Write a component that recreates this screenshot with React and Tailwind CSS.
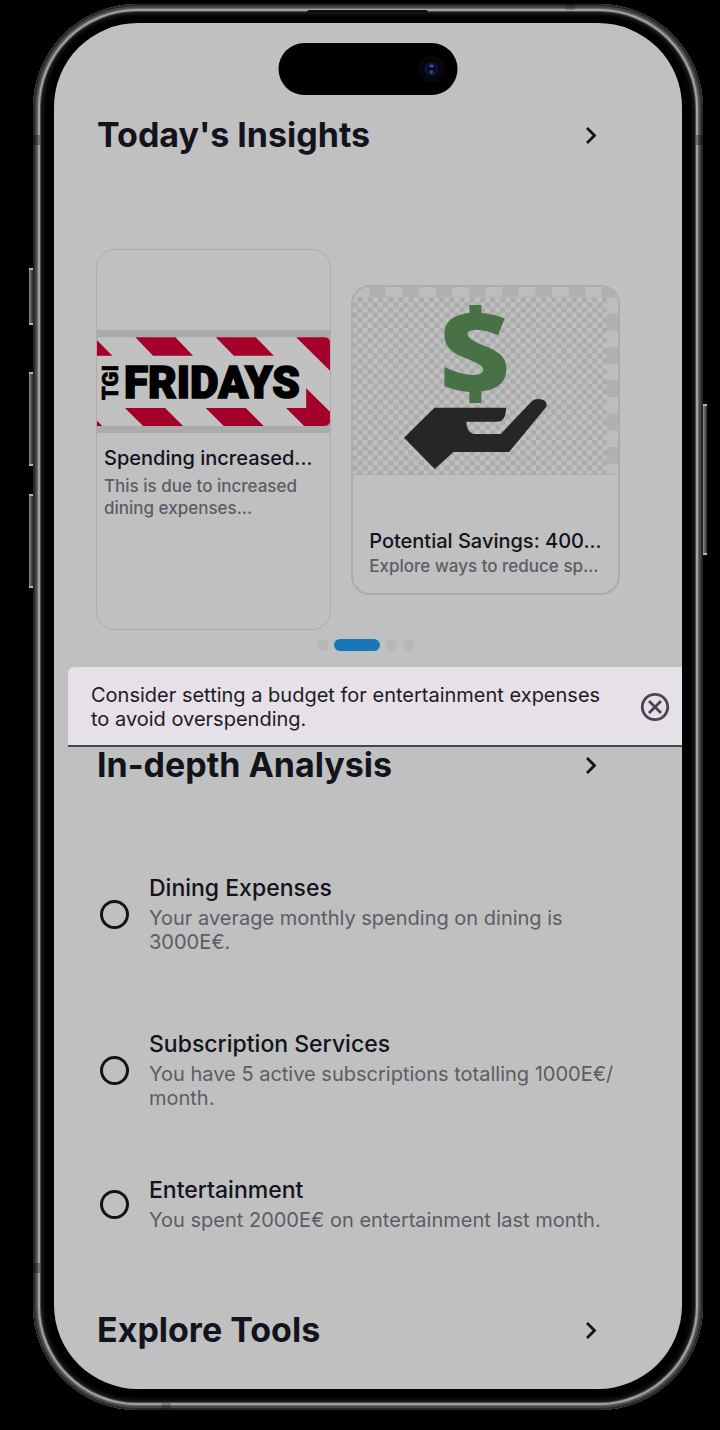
import React from "react";

const analysis = [
  { id: "dining", title: "Dining Expenses", text: "Your average monthly spending on dining is 3000E€.", space: "pt-[87px]" },
  { id: "subs", title: "Subscription Services", text: "You have 5 active subscriptions totalling 1000E€/​month.", space: "pt-[76px]" },
  { id: "fun", title: "Entertainment", text: "You spent 2000E€ on entertainment last month.", space: "pt-[66px]" },
];

function SectionHeader({ title }) {
  return (
    <div className="flex h-11 items-center justify-between pl-[43px] pr-[79px]">
      <h2 className="text-[34px] font-bold leading-[44px] text-[#12131c]">{title}</h2>
      <a href="#" aria-label={title} className="flex h-6 w-6 items-center justify-center">
        <svg viewBox="0 0 24 24" className="h-6 w-6" fill="none" stroke="#12131c" strokeWidth="2.8">
          <path d="M8 5 15.5 12.5 8 20" />
        </svg>
      </a>
    </div>
  );
}

function FridaysLogo() {
  return (
    <svg viewBox="0 0 233 103" preserveAspectRatio="xMidYMid slice" className="block h-[103px] w-full" role="img" aria-label="TGI Fridays">
      <rect width="233" height="103" fill="#ababab" />
      <g transform="translate(-7 -90) scale(.33333)">
        <path d="M21 292H702Q720 292 720 310V540Q720 558 702 558H21Z" fill="#c1c1c1" />
        <g fill="#a50029">
          <path d="M21 301 67 347H21Z" />
          <path d="M136 292H256L309 347H189Z" />
          <path d="M377 292H497L551 347H431Z" />
          <path d="M618 292H702Q720 292 720 310V393Z" />
          <path d="M648 445 720 516V540Q720 558 702 558H642L588 504H648Z" />
          <path d="M347 504H467L521 558H401Z" />
          <path d="M105 504H225L279 558H159Z" />
          <path d="M21 542 37 558H21Z" />
        </g>
      </g>
      <text x="27" y="68" fill="#000" stroke="#000" strokeWidth="1.6" className="font-[Roboto,sans-serif] text-[44px] font-black">FRIDAYS</text>
      <text transform="translate(21 70) rotate(-90)" fill="#000" stroke="#000" strokeWidth="0.6" className="font-[Roboto,sans-serif] text-[22px] font-black">TGI</text>
    </svg>
  );
}

function SavingsArt() {
  return (
    <svg viewBox="0 0 266 187" preserveAspectRatio="xMidYMid slice" className="block h-[187px] w-full" aria-hidden="true">
      <defs>
        <pattern id="large" x="74" y="17" width="99.8" height="99.8" patternUnits="userSpaceOnUse">
          <rect width="99.8" height="99.8" fill="#bdbdbd" />
          <path d="M0 0H49.9V49.9H0ZM49.9 49.9H99.8V99.8H49.9Z" fill="#b0b0b0" />
        </pattern>
        <pattern id="small" x="24" y="67" width="30.6" height="30.6" patternUnits="userSpaceOnUse">
          <rect width="30.6" height="30.6" fill="#bfbfbf" />
          <path d="M15.3 0H30.6V15.3H15.3ZM0 15.3H15.3V30.6H0Z" fill="#ababab" />
        </pattern>
      </defs>
      <g transform="translate(-8 -12) scale(.33333)">
        <rect x="20" y="30" width="806" height="570" fill="url(#large)" />
        <rect x="20" y="67" width="767" height="533" fill="url(#small)" />
        <path fill="#487245" d="M375 90H411V114Q448 117 481 130L461 181Q425 165 395 164Q368 165 369 178Q371 192 405 206C455 226 486 240 486 280C486 325 455 345 411 349V384H375V351Q333 348 300 333V276Q345 299 390 300Q415 299 417 284Q417 270 375 254C330 237 300 222 300 177C300 135 335 118 375 114Z" />
        <path fill="#262626" d="M179 488 270 398H485Q485 440 457 440H366Q367 477 395 477H469L560 381Q568 372 582 372Q606 373 607 390Q606 396 603 399L494 531H327L271 582Z" />
      </g>
    </svg>
  );
}

function SideKey({ className }) {
  return <div aria-hidden="true" className={"absolute w-1 bg-linear-to-r from-[#8a8a8a] to-[#303030] border-y-2 border-[#b5b5b5] " + className} />;
}

export default function App() {
  return (
    <div className="min-h-screen bg-black pb-5 pl-[33px] pr-[17px] pt-1 font-[Inter,sans-serif]">
      <div className="relative rounded-[104px] bg-black px-[21px] pb-[21px] pt-[19px] shadow-[inset_0_0_0_2px_#282828,inset_0_0_0_4px_#484848,inset_0_0_0_5px_#6a6a6a,inset_0_0_0_7px_#a2a2a2,inset_0_0_0_8px_#484848,inset_0_0_5px_9px_#2c2c2c]">
        <SideKey className="-left-1 top-[264px] h-[57px]" />
        <SideKey className="-left-1 top-[368px] h-[94px]" />
        <SideKey className="-left-1 top-[490px] h-[94px]" />
        <SideKey className="-right-1 top-[400px] h-[151px]" />
        <div aria-hidden="true" className="absolute left-[274px] top-[6px] h-[4px] w-[121px] rounded-full bg-[#111111]" />
        <div aria-hidden="true" className="absolute left-[532px] top-0 h-[6px] w-[10px] bg-black/20" />
        <div aria-hidden="true" className="absolute left-0 top-[131px] h-[10px] w-[7px] bg-black/30" />
        <div aria-hidden="true" className="absolute right-0 top-[131px] h-[10px] w-[7px] bg-black/30" />
        <div aria-hidden="true" className="absolute bottom-[137px] left-0 h-[10px] w-[7px] bg-black/30" />
        <div aria-hidden="true" className="absolute bottom-0 left-[128px] h-[7px] w-[10px] bg-black/20" />

        <main className="relative overflow-hidden rounded-[84px] bg-[#c0c0c0] pb-[37px] pt-[90px]">
          <div aria-hidden="true" className="absolute left-1/2 top-5 flex h-[52px] w-[179px] -translate-x-1/2 items-center justify-end rounded-full bg-black pr-3">
            <svg viewBox="0 0 28 28" className="h-7 w-7">
              <circle cx="14" cy="14" r="13.5" fill="#08060a" />
              <circle cx="14" cy="14" r="7" fill="#0c1238" />
              <circle cx="14" cy="14" r="4.5" fill="#070b22" />
              <ellipse cx="14" cy="11" rx="2.5" ry="1.6" fill="#4a459c" />
              <ellipse cx="14" cy="17" rx="2" ry="1.8" fill="#235a80" />
            </svg>
          </div>

          <SectionHeader title="Today's Insights" />

          <div className="flex items-center gap-5 pl-[42px] pr-[62px] pt-[92px]">
            <article className="h-[381px] min-w-0 flex-[236] overflow-hidden rounded-[19px] border border-[#abacb1] pt-20">
              <FridaysLogo />
              <div className="px-[7px] pt-3">
                <h3 className="truncate text-[20px] font-medium leading-[26px] text-[#12131c]">Spending increased...</h3>
                <p className="pt-1 text-[17px] font-medium leading-[22px] text-[#5a5d67]">This is due to increased dining expenses...</p>
              </div>
            </article>
            <article className="h-[310px] min-w-0 flex-[268] overflow-hidden rounded-[19px] border-2 border-[#abacb1]">
              <div className="border-b border-[#abacb1]">
                <SavingsArt />
              </div>
              <div className="pl-4 pt-[53px]">
                <h3 className="text-[20px] font-medium leading-[26px] text-[#12131c] whitespace-nowrap">Potential Savings: 400...</h3>
                <p className="text-[17px] font-medium leading-[24px] text-[#5a5d67] whitespace-nowrap">Explore ways to reduce sp...</p>
              </div>
            </article>
          </div>

          <div className="flex justify-center gap-[6px] pr-[6px] pt-[9px]">
            <span className="h-3 w-[11px] rounded-full bg-[#b5b7ba]" />
            <span className="h-3 w-[46px] rounded-full bg-[#1877b9]" />
            <span className="h-3 w-[11px] rounded-full bg-[#b5b7ba]" />
            <span className="h-3 w-[11px] rounded-full bg-[#b5b7ba]" />
          </div>

          <div role="status" className="ml-[14px] mt-4 flex items-center justify-between rounded-tl-[6px] border-b-2 border-[#49454f] bg-[#e6e0e9] pb-[14px] pl-[23px] pr-3 pt-4">
            <p className="w-[530px] text-[20px] leading-6 text-[#1d1b20]">Consider setting a budget for entertainment expenses to avoid overspending.</p>
            <button type="button" aria-label="Dismiss" className="flex h-[30px] w-[30px] items-center justify-center">
              <svg viewBox="0 0 30 30" className="h-[30px] w-[30px]" fill="none" stroke="#49454f" strokeWidth="2.8">
                <circle cx="15" cy="15" r="12.7" />
                <path d="M9 9 21 21M21 9 9 21" />
              </svg>
            </button>
          </div>

          <div className="-mt-1">
            <SectionHeader title="In-depth Analysis" />
          </div>

          <div className="pl-[46px] pr-[60px]">
            {analysis.map((item) => (
              <label key={item.id} htmlFor={item.id} className={"flex items-center gap-5 " + item.space}>
                <input id={item.id} type="radio" name="analysis" className="h-[29px] w-[29px] shrink-0 appearance-none rounded-full border-3 border-[#12131c] checked:bg-[#12131c]" />
                <span className="block">
                  <span className="block text-[23px] font-medium leading-7 text-[#12131c]">{item.title}</span>
                  <span className="block pt-1 text-[20px] leading-6 text-[#5a5d67]">{item.text}</span>
                </span>
              </label>
            ))}
          </div>

          <div className="pt-[76px]">
            <SectionHeader title="Explore Tools" />
          </div>
        </main>
      </div>
    </div>
  );
}
